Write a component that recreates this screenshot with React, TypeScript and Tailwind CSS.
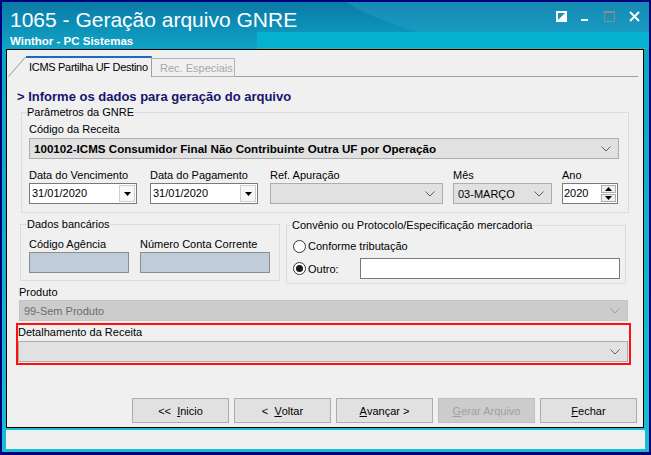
import React from 'react';

function Chevron({ color = '#5f5f5f' }: { color?: string }) {
  return (
    <svg width="10" height="6" viewBox="0 0 10 6" className="shrink-0">
      <path d="M0.5 0.5 L5 5 L9.5 0.5" stroke={color} fill="none" strokeWidth="1" />
    </svg>
  );
}

function Tri({ up = false }: { up?: boolean }) {
  return (
    <svg width="7" height="4" viewBox="0 0 7 4">
      <path d={up ? 'M0 4 L3.5 0 L7 4 Z' : 'M0 0 L7 0 L3.5 4 Z'} fill="#000" />
    </svg>
  );
}

function Combo({ className, children, chevron }: { className: string; children?: React.ReactNode; chevron?: string }) {
  return (
    <div className={`flex h-[21px] items-center border pl-[4px] pr-[7px] ${className}`}>
      <span className="flex-1 truncate">{children}</span>
      <Chevron color={chevron} />
    </div>
  );
}

function DateBox() {
  return (
    <div className="flex h-[21px] w-[108px] border border-[#7a7a7a] bg-white">
      <span className="flex-1 pl-[2px] leading-[19px]">31/01/2020</span>
      <div className="m-px flex w-[16px] items-center justify-center border border-[#cfcfcf] bg-[#f7f7f7]">
        <Tri />
      </div>
    </div>
  );
}

function Radio({ on = false }: { on?: boolean }) {
  return (
    <div className="flex h-[13px] w-[13px] items-center justify-center rounded-full border border-[#333] bg-white">
      {on && <div className="h-[7px] w-[7px] rounded-full bg-[#1a1a1a]" />}
    </div>
  );
}

function Btn({ children, disabled = false }: { children: React.ReactNode; disabled?: boolean }) {
  return (
    <div
      className={`flex h-[25px] w-[97px] items-center justify-center border ${
        disabled ? 'border-[#bfbfbf] bg-[#cccccc] text-[#a0a0a0]' : 'border-[#adadad] bg-[#e1e1e1] text-black'
      }`}
    >
      {children}
    </div>
  );
}

export default function App() {
  return (
    <div className="flex h-[455px] w-[651px] flex-col overflow-hidden bg-[#01017e] px-[2px] pt-[2px] pb-[3px] font-['Liberation_Sans',Arial,sans-serif] text-[11px] leading-[14px] text-black">
      <div className="flex flex-1 flex-col bg-[linear-gradient(180deg,#0aa3c0,#19bcd2)]">
        {/* title bar */}
        <div className="relative h-[47px] shrink-0 overflow-hidden bg-[linear-gradient(180deg,#097aa6_0%,#0c8db6_45%,#11a3c6_100%)]">
          <div className="absolute top-[-40px] right-[-60px] h-[90px] w-[380px] rotate-[8deg] rounded-[50%] bg-[#2aa3c9] opacity-40" />
          <div className="absolute right-0 bottom-0 left-[255px] h-[17px] border-b border-[#5aa58a] bg-[#04b2cf]" />
          <div className="relative flex justify-between pl-[8px] pr-[9px]">
            <div className="flex flex-col">
              <span className="mt-[6px] text-[21px] leading-[24px] text-white">1065 - Geração arquivo GNRE</span>
              <span className="mt-[3px] text-[11.5px] leading-[13px] font-bold text-white">Winthor - PC Sistemas</span>
            </div>
            <div className="mt-[9px] flex h-[11px] items-start gap-[13px]">
              <svg width="11" height="11" viewBox="0 0 11 11">
                <rect x="1" y="1" width="9" height="9" stroke="#fff" strokeWidth="2" fill="none" />
                <path d="M10 1 L10 10 L1 10 Z" fill="#fff" />
              </svg>
              <svg width="9" height="11" viewBox="0 0 9 11">
                <rect x="1" y="8" width="7" height="2" fill="#fff" />
              </svg>
              <svg width="11" height="11" viewBox="0 0 11 11" className="ml-[2px]">
                <rect x="0.5" y="0.5" width="10" height="10" stroke="#8a8a8a" fill="none" />
                <rect x="0" y="0" width="11" height="2" fill="#8a8a8a" />
              </svg>
              <svg width="11" height="11" viewBox="0 0 11 11" className="ml-[1px]">
                <path d="M1 1 L10 10 M10 1 L1 10" stroke="#fff" strokeWidth="2" />
              </svg>
            </div>
          </div>
        </div>

        {/* main panel */}
        <div className="mr-[5px] ml-[4px] flex h-[379px] shrink-0 flex-col border border-black bg-[#f0f0f0]">
          {/* tabs */}
          <div className="mt-[6px] flex h-[21px] pl-px">
            <svg width="18" height="21" viewBox="0 0 18 21" className="shrink-0">
              <path d="M0.5 20.5 L17.5 1" stroke="#9a9a9a" fill="none" />
            </svg>
            <div className="w-[126px] shrink-0 border-t-2 border-r border-t-[#1d6ac4] border-r-[#a0a0a0] bg-[#f0f0f0] pt-[2px] pl-[3px] tracking-[-0.3px] whitespace-nowrap">
              ICMS Partilha UF Destino
            </div>
            <div className="mt-[2px] w-[83px] shrink-0 border-t border-r border-b border-[#b4b4b4] pt-[2px] pl-[8px] whitespace-nowrap text-[#a8a8a8]">
              Rec. Especiais
            </div>
            <div className="mr-[5px] flex-1 border-b border-[#a0a0a0]" />
          </div>

          {/* heading */}
          <div className="mt-[12px] ml-[10px] text-[13px] leading-[16px] font-bold text-[#15156d]">
            &gt; Informe os dados para geração do arquivo
          </div>

          {/* Parametros */}
          <fieldset className="ml-[14px] w-[608px] border border-[#dcdcdc] pr-[9px] pb-[8px] pl-[7px]">
            <legend className="ml-[-2px] leading-[14px]">Parâmetros da GNRE</legend>
            <div className="mt-[3px]">Código da Receita</div>
            <Combo className="mt-[2px] border-[#adadad] bg-[#e1e1e1] text-[11.6px] font-bold">
              100102-ICMS Consumidor Final Não Contribuinte Outra UF por Operação
            </Combo>
            <div className="mt-[9px] flex">
              <div className="flex w-[108px] flex-col">
                <span>Data do Vencimento</span>
                <div className="mt-px">
                  <DateBox />
                </div>
              </div>
              <div className="ml-[13px] flex w-[108px] flex-col">
                <span>Data do Pagamento</span>
                <div className="mt-px">
                  <DateBox />
                </div>
              </div>
              <div className="ml-[12px] flex w-[173px] flex-col">
                <span>Ref. Apuração</span>
                <Combo className="mt-px border-[#adadad] bg-[#e1e1e1]" />
              </div>
              <div className="ml-[10px] flex w-[99px] flex-col">
                <span>Mês</span>
                <Combo className="mt-px border-[#adadad] bg-[#e1e1e1]">03-MARÇO</Combo>
              </div>
              <div className="ml-[10px] flex w-[56px] flex-col">
                <span>Ano</span>
                <div className="mt-px flex h-[21px] border border-[#7a7a7a] bg-white">
                  <span className="flex-1 pl-px leading-[19px]">2020</span>
                  <div className="m-px flex w-[15px] flex-col gap-px">
                    <div className="flex flex-1 items-center justify-center border border-[#adadad] bg-[#efefef]">
                      <Tri up />
                    </div>
                    <div className="flex flex-1 items-center justify-center border border-[#adadad] bg-[#efefef]">
                      <Tri />
                    </div>
                  </div>
                </div>
              </div>
            </div>
          </fieldset>

          {/* bancarios + convenio */}
          <div className="mt-[4px] flex items-start">
            <fieldset className="ml-[13px] w-[259px] border border-[#dcdcdc] pr-[9px] pb-[7px] pl-[8px]">
              <legend className="ml-[-2px] leading-[14px]">Dados bancários</legend>
              <div className="mt-[6px] flex">
                <div className="flex w-[100px] flex-col">
                  <span>Código Agência</span>
                  <div className="mt-px h-[21px] border border-[#8c8c8c] bg-[#c0ccd8]" />
                </div>
                <div className="ml-[11px] flex w-[130px] flex-col">
                  <span>Número Conta Corrente</span>
                  <div className="mt-px h-[21px] border border-[#8c8c8c] bg-[#c0ccd8]" />
                </div>
              </div>
            </fieldset>
            <fieldset className="mt-px ml-[6px] w-[340px] border border-[#dcdcdc] pr-[5px] pb-[4px] pl-[6px]">
              <legend className="ml-[-1px] leading-[14px]">Convênio ou Protocolo/Especificação mercadoria</legend>
              <div className="mt-[6px] flex h-[16px] items-center gap-[2px]">
                <Radio />
                <span>Conforme tributação</span>
              </div>
              <div className="mt-[4px] flex h-[21px] items-center gap-[2px]">
                <Radio on />
                <span>Outro:</span>
                <div className="ml-auto h-[21px] w-[260px] border border-[#7a7a7a] bg-white" />
              </div>
            </fieldset>
          </div>

          {/* produto */}
          <div className="mt-px ml-[12px]">Produto</div>
          <Combo chevron="#9a9a9a" className="mt-px ml-[12px] w-[609px] border-[#c4c4c4] bg-[#cccccc] text-[#6d6d6d]">
            99-Sem Produto
          </Combo>

          {/* detalhamento */}
          <div className="mt-[2px] ml-[9px] w-[615px] border-2 border-[#ff1010] pr-px pb-px">
            <div>Detalhamento da Receita</div>
            <Combo className="mt-[2px] border-[#adadad] bg-[#e1e1e1]" />
          </div>

          {/* buttons */}
          <div className="mt-auto mb-[4px] flex justify-end gap-[5px] pr-[6px]">
            <Btn>
              &lt;&lt;&nbsp;&nbsp;<u>I</u>nicio
            </Btn>
            <Btn>
              &lt;&nbsp;&nbsp;<u>V</u>oltar
            </Btn>
            <Btn>
              <u>A</u>vançar &gt;
            </Btn>
            <Btn disabled>
              <u>G</u>erar Arquivo
            </Btn>
            <Btn>
              <u>F</u>echar
            </Btn>
          </div>
        </div>

        {/* status bar */}
        <div className="mt-[2px] mr-[4px] ml-[4px] h-[19px] shrink-0 border-t border-[#d8f2f6] bg-[#f0f0f0]" />
      </div>
    </div>
  );
}
